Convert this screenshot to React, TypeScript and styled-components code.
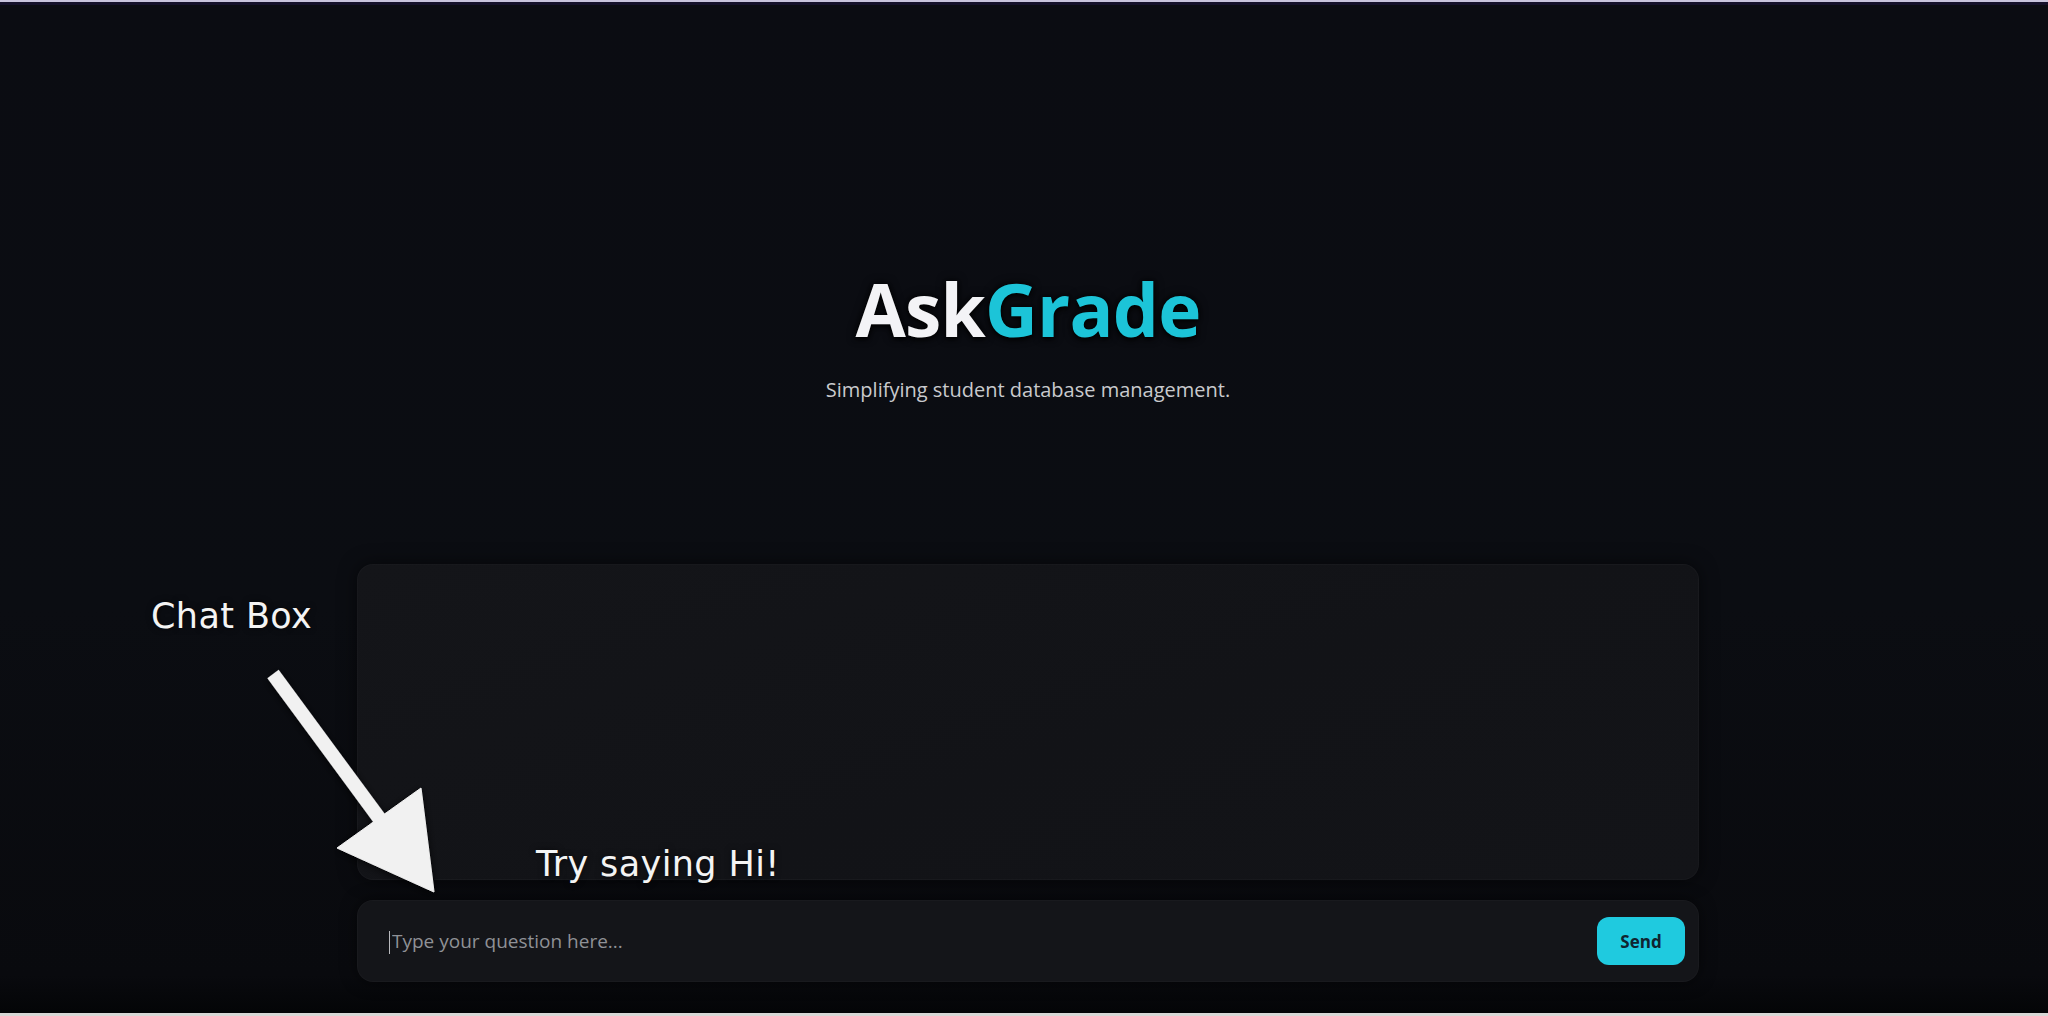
import React from "react";
import styled, { createGlobalStyle } from "styled-components";

const GlobalStyle = createGlobalStyle`
  html, body {
    margin: 0;
    padding: 0;
    background: #0b0d12;
  }
  body {
    font-family: "Open Sans", "Liberation Sans", sans-serif;
    overflow: hidden;
  }
  * { box-sizing: border-box; }
`;

const Page = styled.div`
  position: relative;
  width: 2048px;
  height: 1016px;
  overflow: hidden;
  background:
    linear-gradient(180deg, #0b0c12 0%, #0b0d12 60%, #090a0e 96%, #040507 99.6%);
  border-top: 2px solid #c9c4dc;
  display: flex;
  flex-direction: column;
  align-items: center;
  padding-top: 262px;
  padding-left: 8px;
  &::before {
    content: "";
    position: absolute;
    left: 0;
    right: 0;
    top: 0;
    height: 3px;
    background: #15112a;
  }
  &::after {
    content: "";
    position: absolute;
    left: 0;
    right: 0;
    bottom: 0;
    height: 3px;
    background: #d8d8d6;
  }
`;

const Title = styled.h1`
  margin: 0;
  font-family: "Open Sans", "Liberation Sans", sans-serif;
  font-weight: 700;
  font-size: 73px;
  line-height: 89px;
  letter-spacing: -0.8px;
  text-shadow: 0 0 10px rgba(0, 0, 0, 0.9), 0 2px 4px rgba(0, 0, 0, 0.8);
`;

const TitlePart = styled.span<{ $accent?: boolean }>`
  color: ${(p) => (p.$accent ? "#1cc4d8" : "#f3f3f6")};
`;

const Subtitle = styled.p`
  margin: 23px 0 0;
  font-size: 20px;
  line-height: 28px;
  color: #c9cacd;
  font-weight: 400;
`;

const ChatColumn = styled.div`
  width: 1342px;
  margin-top: 160px;
  display: flex;
  flex-direction: column;
  gap: 20px;
`;

const ChatBox = styled.div`
  height: 316px;
  border-radius: 16px;
  background: linear-gradient(160deg, #141519 0%, #121317 55%, #131418 100%);
  border: 1px solid rgba(255, 255, 255, 0.025);
  box-shadow: 0 0 18px rgba(0, 0, 0, 0.55);
`;

const InputBar = styled.form`
  height: 82px;
  border-radius: 16px;
  background: #141519;
  border: 1px solid rgba(255, 255, 255, 0.025);
  box-shadow: 0 0 16px rgba(0, 0, 0, 0.55);
  display: flex;
  align-items: center;
  padding: 0 13px 0 31px;
`;

const Caret = styled.span`
  width: 1px;
  height: 23px;
  background: #b8b9bd;
  flex: none;
  margin-top: 2px;
`;

const TextInput = styled.input`
  flex: 1;
  height: 40px;
  margin-left: 2px;
  background: transparent;
  border: none;
  outline: none;
  font-family: "Open Sans", "Liberation Sans", sans-serif;
  font-size: 19px;
  color: #e0e0e0;
  padding: 0;
  &::placeholder {
    color: #8f9196;
  }
`;

const SendButton = styled.button`
  width: 88px;
  height: 48px;
  border: none;
  border-radius: 12px;
  background: #1fcadf;
  color: #0f2430;
  font-family: "Open Sans", "Liberation Sans", sans-serif;
  font-weight: 700;
  font-size: 17px;
  cursor: pointer;
  flex: none;
`;

const Annotation = styled.div<{ $left: number; $top: number }>`
  position: absolute;
  left: ${(p) => p.$left}px;
  top: ${(p) => p.$top}px;
  font-family: "DejaVu Sans", "Verdana", sans-serif;
  font-size: 35px;
  line-height: 35px;
  letter-spacing: 0.4px;
  color: #f4f4f4;
  white-space: nowrap;
  text-shadow: 0 0 6px rgba(0, 0, 0, 0.6);
`;

const ArrowLayer = styled.svg`
  position: absolute;
  left: 0;
  top: 0;
  pointer-events: none;
`;

export default function App() {
  return (
    <>
      <GlobalStyle />
      <Page>
        <Title>
          <TitlePart>Ask</TitlePart>
          <TitlePart $accent>Grade</TitlePart>
        </Title>
        <Subtitle>Simplifying student database management.</Subtitle>
        <ChatColumn>
          <ChatBox />
          <InputBar onSubmit={(e) => e.preventDefault()}>
            <Caret />
            <TextInput placeholder="Type your question here..." />
            <SendButton type="submit">Send</SendButton>
          </InputBar>
        </ChatColumn>

        <Annotation $left={151} $top={597}>Chat Box</Annotation>
        <Annotation $left={536} $top={845}>Try saying Hi!</Annotation>
        <ArrowLayer width="2048" height="1016" viewBox="0 0 2048 1016">
          <defs>
            <filter id="arrowShadow" x="-20%" y="-20%" width="140%" height="140%">
              <feDropShadow dx="0" dy="2" stdDeviation="4" floodColor="#000" floodOpacity="0.7" />
            </filter>
          </defs>
          <g filter="url(#arrowShadow)" fill="#f1f1f1" stroke="#f1f1f1">
            <line x1="273" y1="672" x2="382" y2="820" strokeWidth="14" strokeLinecap="butt" />
            <polygon points="337,846 421,786 434,890" strokeWidth="1" strokeLinejoin="round" />
          </g>
        </ArrowLayer>
      </Page>
    </>
  );
}
